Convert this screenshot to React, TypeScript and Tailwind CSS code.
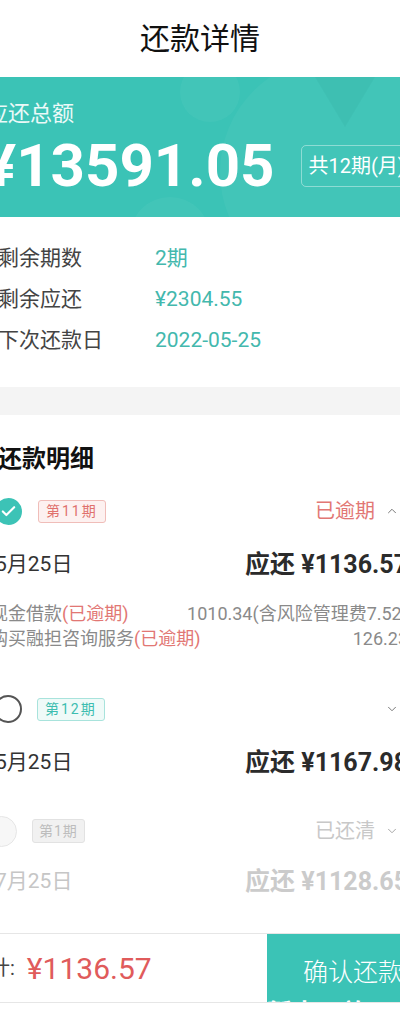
import { Check, ChevronDown, ChevronUp } from "lucide-react"

const font = { fontFamily: 'Roboto, "Noto Sans CJK SC", "Noto Sans", sans-serif' }

interface PeriodProps {
  no: string
  tone: "overdue" | "next" | "done"
  status?: string
  date: string
  amount: string
  open?: boolean
  children?: React.ReactNode
}

function Period({ no, tone, status, date, amount, open, children }: PeriodProps) {
  const done = tone === "done"
  return (
    <div className="flex flex-col">
      <div className="flex h-[48px] items-center">
        {tone === "overdue" && (
          <div className="-ml-[3px] flex h-[27px] w-[27px] items-center justify-center rounded-full bg-[#3cc3b6]">
            <Check className="h-[17px] w-[17px] text-white" strokeWidth={3} />
          </div>
        )}
        {tone === "next" && (
          <div className="-ml-[4px] h-[28px] w-[28px] rounded-full border-2 border-[#555]" />
        )}
        {done && <div className="-ml-[12px] h-[31px] w-[31px] rounded-full border border-[#e6e6e6] bg-[#f7f7f7]" />}
        <span
          className={
            done
              ? "ml-[15px] rounded-[3px] border border-[#e2e2e2] bg-[#f1f1f1] px-[6px] text-[14px] leading-[22px] tracking-[1px] text-[#bdbdbd]"
              : tone === "overdue"
                ? "ml-[16px] rounded-[3px] border border-[#f0bdb9] bg-[#fdf1f0] px-[7px] text-[14px] leading-[21px] tracking-[2px] text-[#e0716d]"
                : "ml-[15px] rounded-[3px] border border-[#a8e3dc] bg-[#effaf8] px-[7px] text-[14px] leading-[21px] tracking-[2px] text-[#3dbdb0]"
          }
        >
          {no}
        </span>
        <span className={"ml-auto text-[20px] " + (done ? "text-[#c8c8c8]" : "text-[#e27774]")}>{status}</span>
        <span className="ml-[10px] mr-[10px] w-[13px]">
          {open ? (
            <ChevronUp className="h-[14px] w-[14px] text-[#666]" strokeWidth={1.5} />
          ) : (
            <ChevronDown className={"h-[14px] w-[14px] " + (done ? "text-[#999]" : "text-[#666]")} strokeWidth={1.5} />
          )}
        </span>
      </div>
      <div className={"flex h-[54px] items-center justify-between " + (done ? "" : "pt-[6px]")}>
        <span className={"-ml-[3px] text-[21px] " + (done ? "text-[#c6c6c6]" : "text-[#333]")}>{date}</span>
        <span className={"text-[25px] font-bold " + (done ? "text-[#cbcbcb]" : "text-[#2b2b2b]")}>
          应还 ¥{amount}
        </span>
      </div>
      {children}
    </div>
  )
}

export default function App() {
  return (
    <div className="w-[400px] overflow-hidden bg-white" style={font}>
      <div className="-ml-[20px] w-[440px]">
        <header className="flex h-[77px] items-center justify-center">
          <h1 className="text-[30px] text-[#111]">还款详情</h1>
        </header>

        <section className="relative h-[140px] overflow-hidden bg-[#3bc3b6] pl-[6px]">
          <div className="absolute -top-[20px] right-[-30px] h-[230px] w-[230px] rounded-full bg-white/[0.04]" />
          <div className="absolute left-[200px] top-[-15px] h-[60px] w-[60px] rounded-full bg-white/[0.04]" />
          <div className="absolute left-[150px] top-[120px] h-[80px] w-[80px] rounded-full bg-white/[0.04]" />
          <svg className="absolute right-[40px] top-[0px]" width="70" height="60" viewBox="0 0 70 60">
            <path d="M5 0 Q20 25 35 50 Q50 25 65 0 Z" fill="rgba(0,90,80,0.05)" />
          </svg>
          <div className="relative pt-[22px] text-[22px] leading-[30px] text-white/90">应还总额</div>
          <div className="relative mt-[6px] flex items-center">
            <span className="-ml-[2px] text-[60px] font-bold leading-[62px] text-white">¥13591.05</span>
            <span className="ml-[26px] whitespace-nowrap rounded-[5px] border border-white/40 px-[7px] text-[20px] leading-[40px] text-white">
              共12期(月)
            </span>
          </div>
        </section>

        <section className="flex flex-col gap-[12px] pb-[32px] pl-[18px] pt-[27px] text-[21px] leading-[29px]">
          <div className="flex">
            <span className="w-[157px] text-[#444]">剩余期数</span>
            <span className="text-[#43b8ad]">2期</span>
          </div>
          <div className="flex">
            <span className="w-[157px] text-[#444]">剩余应还</span>
            <span className="text-[#43b8ad]">¥2304.55</span>
          </div>
          <div className="flex">
            <span className="w-[157px] text-[#444]">下次还款日</span>
            <span className="text-[#43b8ad]">2022-05-25</span>
          </div>
        </section>

        <div className="h-[28px] bg-[#f4f4f4]" />

        <section className="pl-[18px] pr-[12px]">
          <h2 className="pt-[27px] text-[24px] font-bold leading-[34px] text-[#111]">还款明细</h2>
          <div className="mt-[11px] flex flex-col">
            <Period no="第11期" tone="overdue" status="已逾期" date="5月25日" amount="1136.57" open>
              <div className="flex flex-col pt-[12px] text-[18px] leading-[25px] text-[#8a8a8a]">
                <div className="flex justify-between whitespace-nowrap">
                  <span className="-ml-[8px]">
                    现金借款<span className="text-[#e27774]">(已逾期)</span>
                  </span>
                  <span>1010.34(含风险管理费7.52)</span>
                </div>
                <div className="flex justify-between whitespace-nowrap">
                  <span className="-ml-[8px]">
                    购买融担咨询服务<span className="text-[#e27774]">(已逾期)</span>
                  </span>
                  <span>126.23</span>
                </div>
              </div>
              <div className="h-[34px]" />
            </Period>
            <Period no="第12期" tone="next" date="5月25日" amount="1167.98" />
            <div className="h-[20px]" />
            <Period no="第1期" tone="done" status="已还清" date="7月25日" amount="1128.65" />
          </div>
        </section>

        <footer className="mt-[24px] flex h-[70px] border-y border-[#e6e6e6]">
          <div className="flex flex-1 items-center whitespace-nowrap">
            <span className="-ml-[10px] text-[20px] text-[#444]">合计:</span>
            <span className="ml-[12px] text-[30px] text-[#e05b5b]">¥1136.57</span>
          </div>
          <div className="w-[153px] overflow-hidden bg-[#3bc3b6] pl-[36px] text-white">
            <div className="whitespace-nowrap pt-[24px] text-[25px] font-light leading-[30px]">确认还款</div>
            <div className="-ml-[36px] mt-[11px] whitespace-nowrap text-[25px] font-bold leading-[30px]">暂未开放</div>
          </div>
        </footer>
      </div>
    </div>
  )
}
